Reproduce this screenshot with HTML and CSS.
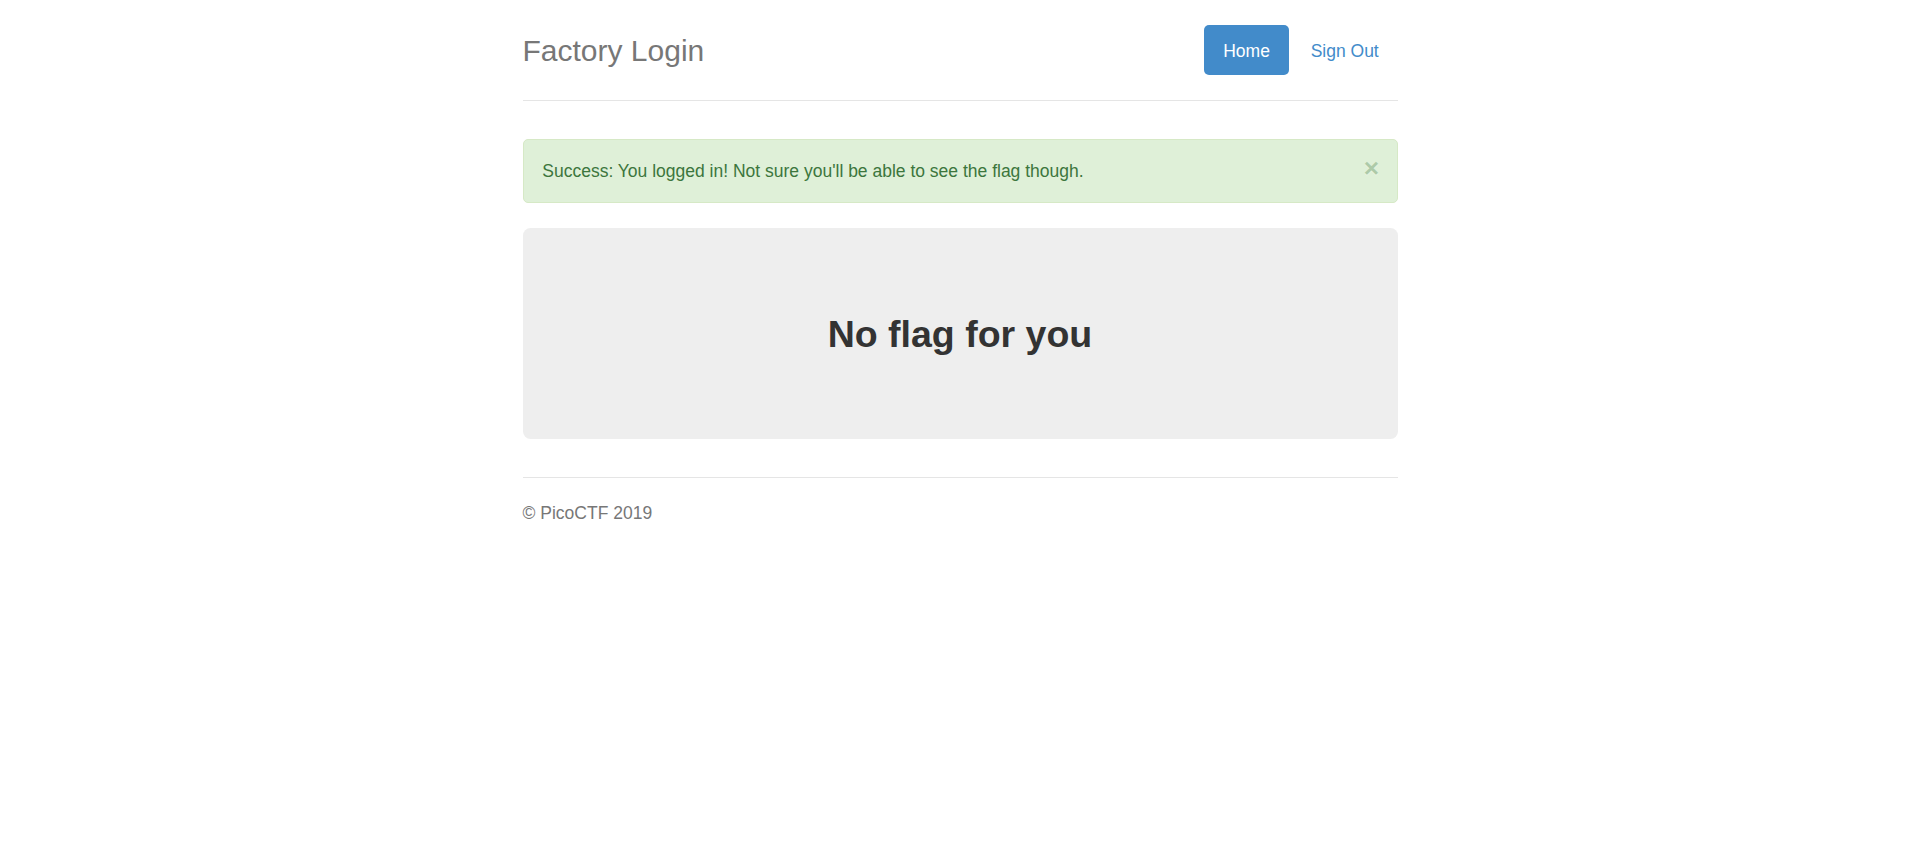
FILE: index.html
```html
<!DOCTYPE html>
<html lang="en">
<head>
<meta charset="utf-8">
<title>Factory Login</title>
<link rel="stylesheet" href="styles.css">
</head>
<body>
<div class="container">
  <div class="header">
    <h3 class="brand">Factory Login</h3>
    <ul class="nav">
      <li><a class="pill active" href="#">Home</a></li>
      <li><a class="pill" href="#">Sign Out</a></li>
    </ul>
  </div>
  <div class="alert">
    <span class="alert-text">Success: You logged in! Not sure you'll be able to see the flag though.</span>
    <button class="close" type="button">&times;</button>
  </div>
  <div class="jumbotron">
    <h2 class="flag-title">No flag for you</h2>
  </div>
  <div class="footer">
    <p class="copy">&copy; PicoCTF 2019</p>
  </div>
</div>
</body>
</html>
```

FILE: styles.css
```css
html, body {
  margin: 0;
  padding: 0;
  background: #fff;
}
body {
  font-family: "Liberation Sans", Arial, Helvetica, sans-serif;
  font-size: 17.5px;
  line-height: 25px;
  color: #333;
  padding-top: 25px;
}
.container {
  max-width: 875px;
  margin: 0 auto;
}
.header {
  display: flex;
  justify-content: space-between;
  align-items: flex-start;
  padding-bottom: 25px;
  border-bottom: 1.25px solid #e5e5e5;
  margin-bottom: 37.5px;
}
.brand {
  margin: 0;
  font-size: 30px;
  line-height: 50px;
  font-weight: normal;
  color: #777;
  position: relative;
  top: 1px;
}
.nav {
  display: flex;
  list-style: none;
  margin: 0;
  padding: 0;
}
.nav li {
  margin-left: 2.5px;
}
.pill {
  display: block;
  padding: 14px 18.75px 11px;
  border-radius: 5px;
  color: #428bca;
  text-decoration: none;
  font-size: 17.5px;
  line-height: 25px;
}
.pill.active {
  background: #428bca;
  color: #fff;
  padding-left: 19.5px;
  padding-right: 19.5px;
}
.alert {
  display: flex;
  justify-content: space-between;
  align-items: flex-start;
  padding: 19.75px 17.5px 17.75px 18.75px;
  background: #dff0d8;
  border: 1.25px solid #d6e9c6;
  border-radius: 5px;
  color: #3c763d;
  margin-bottom: 25px;
}
.close {
  background: none;
  border: 0;
  padding: 0;
  margin: 0;
  height: 25px;
  font-family: "Liberation Sans", Arial, sans-serif;
  font-size: 26.25px;
  font-weight: bold;
  line-height: 25px;
  color: #3c763d;
  opacity: 0.3;
  text-shadow: 0 1.25px 0 #fff;
  position: relative;
  top: -3.5px;
  cursor: pointer;
}
.jumbotron {
  background: #eee;
  border-radius: 7.5px;
  padding: 60px 75px;
  text-align: center;
  margin-bottom: 37.5px;
}
.flag-title {
  margin: 25.5px 0 24.25px;
  font-size: 37.5px;
  line-height: 41.25px;
  font-weight: bold;
  color: #333;
}
.footer {
  border-top: 1.25px solid #e5e5e5;
  padding-top: 23.75px;
  color: #777;
}
.copy {
  margin: 0 0 12.5px;
}
```
